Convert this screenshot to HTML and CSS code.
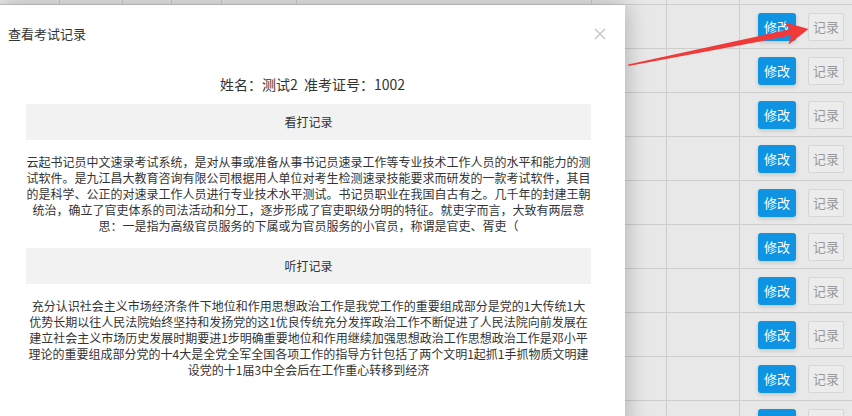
FILE: index.html
```html
<!DOCTYPE html>
<html lang="zh-CN">
<head>
<meta charset="utf-8">
<title>查看考试记录</title>
<link rel="stylesheet" href="styles.css">
</head>
<body>
<div class="table">
  <div class="row row-top"><div class="c"></div><div class="c"></div><div class="c"></div><div class="c"></div><div class="c"></div><div class="c"></div><div class="c"></div><div class="c"></div><div class="c"></div></div>
  <div class="row"><div class="c"></div><div class="c"></div><div class="c"></div><div class="c"></div><div class="c"></div><div class="c"></div><div class="c"></div><div class="c"></div><div class="c ops"><span class="btn edit">修改</span><span class="btn rec">记录</span></div></div>
  <div class="row"><div class="c"></div><div class="c"></div><div class="c"></div><div class="c"></div><div class="c"></div><div class="c"></div><div class="c"></div><div class="c"></div><div class="c ops"><span class="btn edit">修改</span><span class="btn rec">记录</span></div></div>
  <div class="row"><div class="c"></div><div class="c"></div><div class="c"></div><div class="c"></div><div class="c"></div><div class="c"></div><div class="c"></div><div class="c"></div><div class="c ops"><span class="btn edit">修改</span><span class="btn rec">记录</span></div></div>
  <div class="row"><div class="c"></div><div class="c"></div><div class="c"></div><div class="c"></div><div class="c"></div><div class="c"></div><div class="c"></div><div class="c"></div><div class="c ops"><span class="btn edit">修改</span><span class="btn rec">记录</span></div></div>
  <div class="row"><div class="c"></div><div class="c"></div><div class="c"></div><div class="c"></div><div class="c"></div><div class="c"></div><div class="c"></div><div class="c"></div><div class="c ops"><span class="btn edit">修改</span><span class="btn rec">记录</span></div></div>
  <div class="row"><div class="c"></div><div class="c"></div><div class="c"></div><div class="c"></div><div class="c"></div><div class="c"></div><div class="c"></div><div class="c"></div><div class="c ops"><span class="btn edit">修改</span><span class="btn rec">记录</span></div></div>
  <div class="row"><div class="c"></div><div class="c"></div><div class="c"></div><div class="c"></div><div class="c"></div><div class="c"></div><div class="c"></div><div class="c"></div><div class="c ops"><span class="btn edit">修改</span><span class="btn rec">记录</span></div></div>
  <div class="row"><div class="c"></div><div class="c"></div><div class="c"></div><div class="c"></div><div class="c"></div><div class="c"></div><div class="c"></div><div class="c"></div><div class="c ops"><span class="btn edit">修改</span><span class="btn rec">记录</span></div></div>
  <div class="row"><div class="c"></div><div class="c"></div><div class="c"></div><div class="c"></div><div class="c"></div><div class="c"></div><div class="c"></div><div class="c"></div><div class="c ops"><span class="btn edit">修改</span><span class="btn rec">记录</span></div></div>
  <div class="row"><div class="c"></div><div class="c"></div><div class="c"></div><div class="c"></div><div class="c"></div><div class="c"></div><div class="c"></div><div class="c"></div><div class="c ops"><span class="btn edit">修改</span><span class="btn rec">记录</span></div></div>
</div>

<div class="modal">
  <div class="modal-head">
    <span class="modal-title">查看考试记录</span>
    <svg class="close" width="12" height="12" viewBox="0 0 12 12"><path d="M1 1 L11 11 M11 1 L1 11" stroke="#c4c4c4" stroke-width="1.4" fill="none"/></svg>
  </div>
  <div class="info">姓名：测试2&nbsp;&nbsp;准考证号：1002</div>
  <div class="bar">看打记录</div>
  <p class="para">云起书记员中文速录考试系统，是对从事或准备从事书记员速录工作等专业技术工作人员的水平和能力的测<br>试软件。是九江昌大教育咨询有限公司根据用人单位对考生检测速录技能要求而研发的一款考试软件，其目<br>的是科学、公正的对速录工作人员进行专业技术水平测试。书记员职业在我国自古有之。几千年的封建王朝<br>统治，确立了官吏体系的司法活动和分工，逐步形成了官吏职级分明的特征。就吏字而言，大致有两层意<br>思：一是指为高级官员服务的下属或为官员服务的小官员，称谓是官吏、胥吏（</p>
  <div class="bar">听打记录</div>
  <p class="para">充分认识社会主义市场经济条件下地位和作用思想政治工作是我党工作的重要组成部分是党的1大传统1大<br>优势长期以往人民法院始终坚持和发扬党的这1优良传统充分发挥政治工作不断促进了人民法院向前发展在<br>建立社会主义市场历史发展时期要进1步明确重要地位和作用继续加强思想政治工作思想政治工作是邓小平<br>理论的重要组成部分党的十4大是全党全军全国各项工作的指导方针包括了两个文明1起抓1手抓物质文明建<br>设党的十1届3中全会后在工作重心转移到经济</p>
</div>

<svg class="arrow" width="852" height="416" viewBox="0 0 852 416">
  <polygon points="628,64.5 789.6,29.3 784.6,22.2 808.5,29 788.6,44.6 790.9,35.6 628.6,66" fill="#f03a3a"/>
</svg>
</body>
</html>
```

FILE: styles.css
```css
* { box-sizing: border-box; }
html, body {
  margin: 0;
  padding: 0;
  width: 852px;
  height: 416px;
  overflow: hidden;
}
body {
  background: #e8e8e8;
  font-family: "Noto Sans CJK SC", "Noto Sans", "Liberation Sans", sans-serif;
  color: #333;
  position: relative;
}

.table {
  display: flex;
  flex-direction: column;
}
.row {
  display: grid;
  grid-template-columns: 60px 63px 49px 50px 75px 295px 75px 73px 1fr;
  height: 44px;
  border-bottom: 1px solid #cdcdcd;
}
.row-top { height: 5px; }
.c {
  border-right: 1px solid #cdcdcd;
}
.c:last-child { border-right: none; }
.ops {
  display: flex;
  align-items: center;
  gap: 12px;
  padding-left: 18px;
}
.btn {
  display: inline-flex;
  align-items: center;
  justify-content: center;
  height: 28px;
  font-size: 13px;
  border-radius: 3px;
}
.edit {
  width: 38px;
  background: #0f94e4;
  color: #fff;
  box-shadow: 0 2px 4px rgba(0, 0, 0, 0.15);
}
.rec {
  width: 36px;
  background: #ececec;
  border: 1px solid #d6d6d6;
  color: #999;
  border-radius: 2px;
}

.modal {
  position: absolute;
  left: 0;
  top: 5px;
  width: 625px;
  height: 430px;
  background: #fff;
  box-shadow: 0 0 22px rgba(0, 0, 0, 0.28);
}
.modal-head {
  height: 58px;
  display: flex;
  align-items: center;
  justify-content: space-between;
  padding: 0 19px 0 8px;
}
.modal-title {
  font-size: 13px;
  line-height: 16px;
  color: #333;
}
.close { display: block; }
.info {
  margin-top: 11px;
  height: 20px;
  line-height: 20px;
  font-size: 14px;
  text-align: center;
  color: #333;
}
.bar {
  margin: 10px 0 0 26px;
  width: 565px;
  height: 36px;
  line-height: 36px;
  background: #f2f2f2;
  text-align: center;
  font-size: 12px;
  color: #333;
}
.bar + .para + .bar { margin-top: 14px; }
.para {
  margin: 14px 0 0 26px;
  width: 565px;
  font-size: 12px;
  line-height: 16px;
  text-align: center;
  color: #333;
}

.arrow {
  position: absolute;
  left: 0;
  top: 0;
  pointer-events: none;
}
```
